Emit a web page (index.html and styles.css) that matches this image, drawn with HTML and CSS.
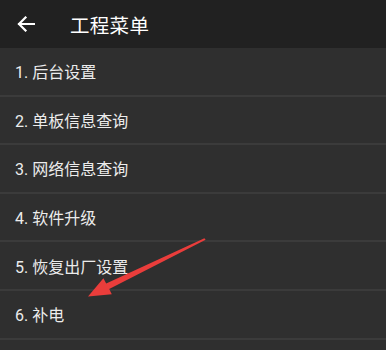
FILE: index.html
```html
<!DOCTYPE html>
<html lang="zh-CN">
<head>
    <meta charset="UTF-8">
    <meta name="viewport" content="width=device-width, initial-scale=1.0">
    <title>工程菜单</title>
    <link rel="stylesheet" href="styles.css">
</head>
<body>
<header class="toolbar">
    <button class="back-button" aria-label="返回">
        <svg width="18" height="16" viewBox="0 0 18 16">
            <path d="M17 8H2M8.5 1.5L2 8l6.5 6.5" fill="none" stroke="#ffffff" stroke-width="2.2" stroke-linecap="square"/>
        </svg>
    </button>
    <h1 class="title">工程菜单</h1>
</header>
<ul class="menu">
    <li class="menu-item">1. 后台设置</li>
    <li class="menu-item">2. 单板信息查询</li>
    <li class="menu-item">3. 网络信息查询</li>
    <li class="menu-item">4. 软件升级</li>
    <li class="menu-item">5. 恢复出厂设置</li>
    <li class="menu-item">6. 补电</li>
</ul>
<!-- annotation drawn over the list -->
<svg class="annotation" width="386" height="350" viewBox="0 0 386 350">
    <polygon fill="#ea3d3b" points="204.4,238.2 106.2,283.6 103.4,278.2 88,296.5 111.8,294.2 109.2,289 205.6,239.8"/>
</svg>
</body>
</html>
```

FILE: styles.css
```css
/* CSS Styles */
body {
    margin: 0;
    width: 386px;
    height: 350px;
    overflow: hidden;
    position: relative;
    background: #2f2f2f;
    font-family: Roboto, "Noto Sans CJK SC", sans-serif;
}

.toolbar {
    display: flex;
    align-items: center;
    height: 48px;
    background: #212121;
}

.back-button {
    display: flex;
    align-items: center;
    justify-content: center;
    width: 52px;
    height: 48px;
    padding: 0;
    margin: 0;
    background: none;
    border: none;
}

.title {
    margin: 0 0 0 18px;
    font-size: 19.5px;
    font-weight: 400;
    color: #ffffff;
    letter-spacing: 0.3px;
}

.menu {
    list-style: none;
    margin: 0;
    padding: 0;
}

.menu-item {
    box-sizing: border-box;
    display: flex;
    align-items: center;
    height: 48.6px;
    padding-left: 15px;
    border-bottom: 2px solid #3b3b3b;
    font-size: 16px;
    color: #ececec;
}

.annotation {
    position: absolute;
    left: 0;
    top: 0;
    pointer-events: none;
}
```
